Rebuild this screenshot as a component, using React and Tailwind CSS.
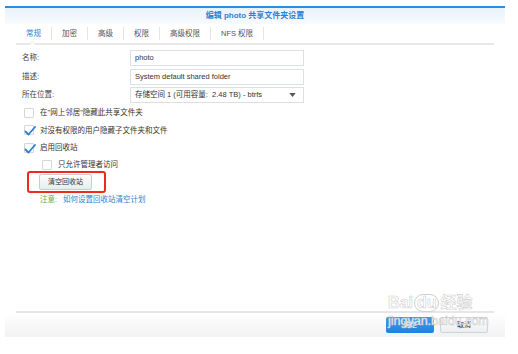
const font = { fontFamily: '"Liberation Sans", "Noto Sans CJK SC", sans-serif' };

const tabs = ['常规', '加密', '高级', '权限', '高级权限', 'NFS 权限'];

function Check({ checked, className = '' }) {
  return (
    <div className={`relative w-[10px] h-[10px] border border-[#d6d6d6] bg-white rounded-[1px] ${className}`}>
      {checked && (
        <svg viewBox="0 0 12 12" className="absolute -left-[1px] -top-[1px] w-[12px] h-[12px]">
          <path d="M1.5 6.5 L4.5 9.5 L11 2" fill="none" stroke="#2a7fd6" strokeWidth="1.8" strokeLinecap="round" strokeLinejoin="round" />
        </svg>
      )}
    </div>
  );
}

function Row({ label, children }) {
  return (
    <div className="flex items-center h-[16px]">
      <div className="w-[108px] text-[7.5px] text-[#444]">{label}</div>
      {children}
    </div>
  );
}

export default function App() {
  return (
    <div className="w-[518px] h-[354px] bg-white relative overflow-hidden pt-[6px] pl-[5px]" style={font}>
      <div className="w-[500px] h-[331px] flex flex-col border-t-2 border-[#2b8ce6]">
        {/* header */}
        <div className="h-[16px] flex items-center justify-center bg-gradient-to-b from-[#e9f2fb] to-[#f9fbfe]">
          <span className="text-[8px] font-bold text-[#2f80d4]">编辑 photo 共享文件夹设置</span>
        </div>

        {/* tabs */}
        <div className="mx-[11px] h-[21px] flex items-center border-b-2 border-[#e8e8e8] relative">
          {tabs.map((t, i) => (
            <div
              key={t}
              className={`px-[10px] h-[13px] flex items-center border-r border-[#e4e4e4] text-[7.5px] ${i === 0 ? 'text-[#2f80d4]' : 'text-[#555]'}`}
            >
              {t}
            </div>
          ))}
          <div className="absolute left-[13px] -bottom-[2px] w-[7px] h-[4px]">
            <svg viewBox="0 0 8 4" className="w-full h-full">
              <path d="M0 4 L4 0 L8 4" fill="white" stroke="#e0e0e0" strokeWidth="0.8" />
            </svg>
          </div>
        </div>

        {/* form */}
        <div className="pl-[17px] pt-[5px] flex flex-col gap-[2.5px]">
          <Row label="名称:">
            <div className="w-[174px] h-[16px] border border-[#dcdfe3] flex items-center px-[4px] text-[7.5px] text-[#333]">photo</div>
          </Row>
          <Row label="描述:">
            <div className="w-[174px] h-[16px] border border-[#dcdfe3] flex items-center px-[4px] text-[7.5px] text-[#333]">System default shared folder</div>
          </Row>
          <Row label="所在位置:">
            <div className="w-[174px] h-[16px] border border-[#dcdfe3] flex items-center justify-between px-[4px] text-[7.5px] text-[#333]">
              <span>存储空间 1 (可用容量:&nbsp; 2.48 TB) - btrfs</span>
              <svg viewBox="0 0 8 5" className="w-[7px] h-[4px] mr-[3px]">
                <path d="M0 0 L8 0 L4 5 Z" fill="#555" />
              </svg>
            </div>
          </Row>
        </div>

        <div className="pl-[19px] pt-[5px] flex flex-col gap-[7.3px] text-[7.5px] text-[#333]">
          <div className="flex items-center gap-[6px] h-[10px]">
            <Check />
            <span>在"网上邻居"隐藏此共享文件夹</span>
          </div>
          <div className="flex items-center gap-[6px] h-[10px]">
            <Check checked />
            <span>对没有权限的用户隐藏子文件夹和文件</span>
          </div>
          <div className="flex items-center gap-[6px] h-[10px]">
            <Check checked />
            <span>启用回收站</span>
          </div>
          <div className="flex items-center gap-[6px] h-[10px] pl-[18px]">
            <Check />
            <span>只允许管理者访问</span>
          </div>
        </div>

        <div className="ml-[22px] mt-[1px] w-[79px] h-[22px] border-[2.5px] border-[#ec2a1e] rounded-[3px] flex items-center pl-[10px]">
          <div className="w-[53px] h-[16px] rounded-[2px] border border-[#c9ccd0] bg-gradient-to-b from-[#fdfdfd] to-[#e9ebee] flex items-center justify-center text-[7px] text-[#333]">
            清空回收站
          </div>
        </div>

        <div className="pl-[35px] mt-[1px] text-[7.5px] flex gap-[6px]">
          <span className="text-[#6aae4a]">注意:</span>
          <span className="text-[#2f7fd4]">如何设置回收站清空计划</span>
        </div>

        <div className="flex-1" />

        {/* footer */}
        <div className="mx-[11px] h-[2px] bg-[#e6e6e6]" />
        <div className="h-[24px] bg-gradient-to-b from-[#ffffff] to-[#f2f2f2] flex items-center justify-end gap-[6px] pr-[17px]">
          <div className="w-[48px] h-[16px] rounded-[2px] bg-gradient-to-b from-[#3d9bf0] to-[#1f82e0] flex items-center justify-center text-[7px] text-white">确定</div>
          <div className="w-[48px] h-[16px] rounded-[2px] border border-[#cfd2d6] bg-gradient-to-b from-[#fdfdfd] to-[#eceef1] flex items-center justify-center text-[7px] text-[#333]">取消</div>
        </div>
      </div>

      {/* watermark */}
      <div className="absolute left-[388px] top-[294px] flex flex-col items-start pointer-events-none">
        <div className="flex items-center text-[16px] font-bold text-white [-webkit-text-stroke:0.6px_#d0d0d0] leading-none">
          <span>Bai</span>
          <span className="mx-[1px] px-[2px] rounded-full border border-[#d0d0d0]">du</span>
          <span>经验</span>
        </div>
        <div className="text-[12.5px] text-white [-webkit-text-stroke:0.5px_#c8c8c8] leading-none mt-[3px]">jingyan.baidu.com</div>
      </div>
    </div>
  );
}
